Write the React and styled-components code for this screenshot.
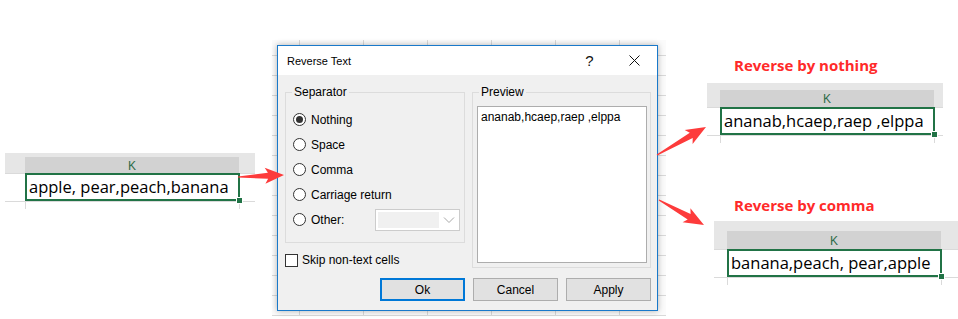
import React from 'react';
import styled, { createGlobalStyle } from 'styled-components';

const GlobalStyle = createGlobalStyle`
  html, body {
    margin: 0;
    padding: 0;
    background: #ffffff;
  }
  body {
    font-family: "Liberation Sans", Arial, sans-serif;
    color: #000;
  }
`;

// arrow polygon: tapered shaft + triangular head
const arrowPoints = (x1, y1, x2, y2, headLen, headHalf, tailHalf, neckHalf) => {
  const dx = x2 - x1;
  const dy = y2 - y1;
  const len = Math.hypot(dx, dy);
  const ux = dx / len;
  const uy = dy / len;
  const nx = -uy;
  const ny = ux;
  const kx = x2 - ux * headLen;
  const ky = y2 - uy * headLen;
  const bx = kx - ux * 3;
  const by = ky - uy * 3;
  const pts = [
    [x1 + nx * tailHalf, y1 + ny * tailHalf],
    [kx + nx * neckHalf, ky + ny * neckHalf],
    [bx + nx * headHalf, by + ny * headHalf],
    [x2, y2],
    [bx - nx * headHalf, by - ny * headHalf],
    [kx - nx * neckHalf, ky - ny * neckHalf],
    [x1 - nx * tailHalf, y1 - ny * tailHalf],
  ];
  return pts.map((p) => p.map((v) => v.toFixed(1)).join(',')).join(' ');
};

const ARROWS = [
  [238, 177, 284, 175, 16, 8, 0.6, 3],
  [657, 155, 706, 127, 17, 8, 0.6, 3],
  [659, 200, 704, 225, 17, 8, 0.6, 3],
];

const App = () => {
  return (
    <>
      <GlobalStyle />
      <Page>
        <LeftArea>
          <SheetSnippet width={250} left={20} top={4} headerH={17} text="apple, pear,peach,banana" />
        </LeftArea>

        <Backdrop>
          <ReverseTextDialog />
        </Backdrop>

        <RightArea>
          <Caption>Reverse by nothing</Caption>
          <SheetSnippet width={236} left={13} top={7} headerH={18} text="ananab,hcaep,raep ,elppa" />
          <Caption $top={53} $bottom={7}>Reverse by comma</Caption>
          <SheetSnippet width={244} left={13} top={10} headerH={19} offset={7} text="banana,peach, pear,apple" />
        </RightArea>

        <ArrowLayer width="958" height="319" viewBox="0 0 958 319">
          {ARROWS.map((a, i) => (
            <polygon key={i} points={arrowPoints(...a)} fill="#fd3b3b" />
          ))}
        </ArrowLayer>
      </Page>
    </>
  );
};

const SheetSnippet = ({ width, left, top, headerH, text, offset = 0 }) => (
  <Snippet $w={width} $ml={offset}>
    <HeaderBand $top={top} $left={left}>
      <ColHeader $h={headerH}>K</ColHeader>
    </HeaderBand>
    <SheetRow $left={left}>
      <ActiveCell>
        {text}
        <FillHandle />
      </ActiveCell>
    </SheetRow>
    <RowTail $left={left} />
  </Snippet>
);

const RADIOS = ['Nothing', 'Space', 'Comma', 'Carriage return'];

const ReverseTextDialog = () => (
  <Dialog>
    <TitleBar>
      <TitleText>Reverse Text</TitleText>
      <TitleButton>?</TitleButton>
      <TitleButton>
        <svg width="11" height="11" viewBox="0 0 11 11">
          <path d="M0.5 0.5 L10.5 10.5 M10.5 0.5 L0.5 10.5" stroke="#111" strokeWidth="1" fill="none" />
        </svg>
      </TitleButton>
    </TitleBar>
    <DialogBody>
      <LeftColumn>
        <GroupBox $h={158}>
          <Legend>Separator</Legend>
          <RadioList>
            {RADIOS.map((label, i) => (
              <RadioRow key={label}>
                <Radio $checked={i === 0} />
                <span>{label}</span>
              </RadioRow>
            ))}
            <RadioRow>
              <Radio />
              <span>Other:</span>
              <Combo>
                <ComboField />
                <svg width="12" height="8" viewBox="0 0 12 8">
                  <path d="M1 1.5 L6 6.5 L11 1.5" stroke="#a8a8a8" strokeWidth="1" fill="none" />
                </svg>
              </Combo>
            </RadioRow>
          </RadioList>
        </GroupBox>
        <CheckRow>
          <CheckBox />
          <span>Skip non-text cells</span>
        </CheckRow>
      </LeftColumn>

      <GroupBox $h={183}>
        <Legend>Preview</Legend>
        <PreviewBox>ananab,hcaep,raep ,elppa</PreviewBox>
      </GroupBox>

      <ButtonRow>
        <Button $primary>Ok</Button>
        <Button>Cancel</Button>
        <Button>Apply</Button>
      </ButtonRow>
    </DialogBody>
  </Dialog>
);

// Styled components
const Page = styled.div`
  position: relative;
  display: flex;
  align-items: flex-start;
  width: 958px;
  height: 319px;
  overflow: hidden;
`;

const LeftArea = styled.div`
  margin: 153px 0 0 5px;
`;

const RightArea = styled.div`
  display: flex;
  flex-direction: column;
  margin: 56px 0 0 41px;
  width: 251px;
`;

const Caption = styled.div`
  margin: ${(p) => p.$top || 0}px 0 ${(p) => (p.$bottom == null ? 9 : p.$bottom)}px 27px;
  font-family: "Open Sans", "Liberation Sans", sans-serif;
  font-weight: 700;
  font-size: 15px;
  line-height: 18px;
  color: #ff2a2a;
  white-space: nowrap;
`;

const Snippet = styled.div`
  width: ${(p) => p.$w}px;
  margin-left: ${(p) => p.$ml}px;
`;

const HeaderBand = styled.div`
  display: flex;
  background: #e6e6e6;
  padding: ${(p) => p.$top}px 0 0 ${(p) => p.$left}px;
`;

const ColHeader = styled.div`
  width: 214px;
  height: ${(p) => p.$h}px;
  display: flex;
  align-items: center;
  justify-content: center;
  background: #d2d2d2;
  font-family: "Liberation Sans", Arial, sans-serif;
  font-size: 12px;
  color: #2f6b48;
`;

const SheetRow = styled.div`
  display: flex;
  height: 27px;
  padding-left: ${(p) => p.$left}px;
  border-top: 1px solid #dadada;
  border-bottom: 1px solid #dadada;
  margin-top: -1px;
`;

const ActiveCell = styled.div`
  position: relative;
  box-sizing: border-box;
  width: 215px;
  height: 28px;
  margin-top: -1px;
  border: 2px solid #217346;
  padding: 0 0 1px 2px;
  display: flex;
  align-items: center;
  font-family: "Open Sans", "Liberation Sans", sans-serif;
  font-size: 16.5px;
  color: #000;
  white-space: nowrap;
`;

const FillHandle = styled.div`
  position: absolute;
  right: -5px;
  bottom: -5px;
  width: 5px;
  height: 5px;
  background: #217346;
  border: 1px solid #fff;
`;

const RowTail = styled.div`
  width: 213px;
  height: 7px;
  margin-left: ${(p) => p.$left}px;
  border-left: 1px solid #dadada;
  border-right: 1px solid #dadada;
`;

const Backdrop = styled.div`
  margin: 40px 0 0 17px;
  width: 394px;
  height: 276px;
  box-sizing: border-box;
  padding: 5px 0 0 5px;
  background-color: #fbfbfb;
  background-image: linear-gradient(#d9d9d9 1px, transparent 1px),
    linear-gradient(90deg, #d9d9d9 1px, transparent 1px);
  background-size: 64px 20px;
  background-position: 27px 15px;
`;

const Dialog = styled.div`
  box-sizing: border-box;
  width: 381px;
  height: 266px;
  border: 1px solid #1979ca;
  background: #f0f0f0;
  box-shadow: 0 0 6px rgba(0, 0, 0, 0.3);
  display: flex;
  flex-direction: column;
  font-family: "Liberation Sans", Arial, sans-serif;
  font-size: 12px;
  color: #000;
`;

const TitleBar = styled.div`
  display: flex;
  align-items: center;
  height: 29px;
  background: #ffffff;
  padding-left: 9px;
`;

const TitleText = styled.div`
  flex: 1;
  font-size: 11px;
`;

const TitleButton = styled.div`
  width: 45px;
  height: 29px;
  display: flex;
  align-items: center;
  justify-content: center;
  font-size: 15px;
  color: #111;
`;

const DialogBody = styled.div`
  display: grid;
  grid-template-columns: 180px 179px;
  column-gap: 7px;
  row-gap: 10px;
  padding: 10px 6px 9px 7px;
`;

const LeftColumn = styled.div`
  display: flex;
  flex-direction: column;
`;

const GroupBox = styled.fieldset`
  box-sizing: border-box;
  height: ${(p) => p.$h}px;
  margin: 0;
  padding: 0 4px 4px 7px;
  min-width: 0;
  border: 1px solid #dcdcdc;
  display: flex;
  flex-direction: column;
`;

const Legend = styled.legend`
  margin-left: -1px;
  padding: 0 2px;
  font-size: 12px;
  line-height: 14px;
`;

const RadioList = styled.div`
  display: flex;
  flex-direction: column;
  padding-top: 8px;
`;

const RadioRow = styled.div`
  display: flex;
  align-items: center;
  gap: 5px;
  height: 25px;
  white-space: nowrap;
`;

const Radio = styled.span`
  box-sizing: border-box;
  flex: none;
  width: 13px;
  height: 13px;
  border-radius: 50%;
  border: 1px solid #333;
  background: #fff;
  display: flex;
  align-items: center;
  justify-content: center;
  &::after {
    content: '';
    display: ${(p) => (p.$checked ? 'block' : 'none')};
    width: 7px;
    height: 7px;
    border-radius: 50%;
    background: #333;
  }
`;

const Combo = styled.div`
  box-sizing: border-box;
  margin-left: auto;
  width: 85px;
  height: 22px;
  border: 1px solid #cccccc;
  background: #fff;
  display: flex;
  align-items: center;
  padding: 0 4px 0 2px;
  gap: 4px;
`;

const ComboField = styled.div`
  flex: 1;
  height: 16px;
  background: #f0f0f0;
`;

const CheckRow = styled.div`
  display: flex;
  align-items: center;
  gap: 4px;
  margin-top: 10px;
  height: 14px;
`;

const CheckBox = styled.span`
  box-sizing: border-box;
  width: 13px;
  height: 13px;
  border: 1px solid #333;
  background: #fff;
`;

const PreviewBox = styled.div`
  flex: 1;
  margin: 7px -1px 0 -3px;
  border: 1px solid #adadad;
  background: #fff;
  padding: 3px 3px;
  line-height: 15px;
  white-space: nowrap;
  overflow: hidden;
`;

const ButtonRow = styled.div`
  grid-column: 1 / -1;
  display: flex;
  justify-content: flex-end;
  gap: 8px;
`;

const Button = styled.div`
  box-sizing: border-box;
  width: 85px;
  height: 23px;
  display: flex;
  align-items: center;
  justify-content: center;
  background: #e1e1e1;
  border: ${(p) => (p.$primary ? '2px solid #0078d7' : '1px solid #adadad')};
  font-size: 12px;
`;

const ArrowLayer = styled.svg`
  position: absolute;
  left: 0;
  top: 0;
  pointer-events: none;
`;

export default App;
